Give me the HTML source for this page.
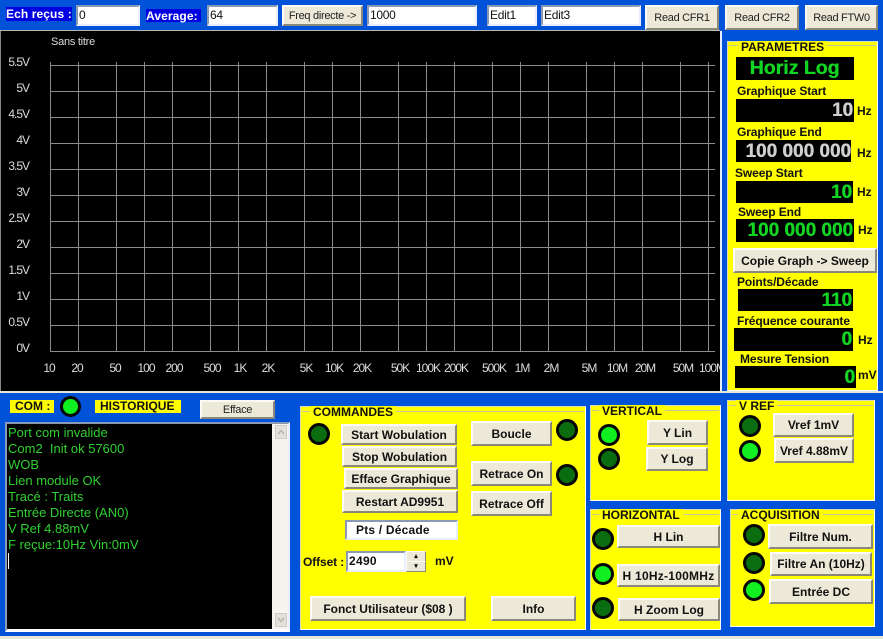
<!DOCTYPE html>
<html><head><meta charset="utf-8">
<style>
html,body{margin:0;padding:0;width:883px;height:639px;overflow:hidden;background:#0052d8}
body{position:relative;font-family:"Liberation Sans",sans-serif;font-size:12px;color:#000}
div{position:absolute;box-sizing:border-box;white-space:nowrap}
.btn{background:#ece9d8;border:2px solid;border-color:#fbfaf4 #8a8878 #8a8878 #fbfaf4;text-align:center;font-weight:bold;font-size:12px;letter-spacing:0;color:#111;display:flex;align-items:center;justify-content:center}
.thin{font-weight:normal;font-size:11px;letter-spacing:-.3px;color:#222}
.in{background:#fff;border:2px solid;border-color:#8b99b5 #e8eefc #e8eefc #8b99b5;padding-left:1px;font-size:12px;line-height:17px;letter-spacing:-.3px;color:#111}
.gb{background:#ffff00;border:1px solid #d8d8c0;border-right-color:#fff;border-bottom-color:#fff}
.gl{height:1px;background:#c8c8a0}
.t{font-weight:bold;font-size:12px;letter-spacing:0;line-height:13px;background:#ffff00;padding:0 3px;color:#111}
.l{font-weight:bold;font-size:12px;letter-spacing:-.1px;line-height:14px;color:#111}
.led{width:22px;height:22px;border-radius:50%;border:3px solid #050505;background:#0a6e10}
.on{background:#10f020}
.v{background:#000;font-weight:bold;font-size:19px;text-align:right;color:#12d422;line-height:24px;padding-right:1px;text-shadow:.4px 0 0 currentColor}
.w{color:#cfcfcf}
.m{left:8px;color:#30d030;font-size:13px;line-height:16px;height:16px}
.top{font-weight:bold;color:#fff;background:#0000e0;font-size:12px;letter-spacing:.1px;line-height:14px}
svg text{letter-spacing:-1px}
</style></head><body>

<!-- top bar -->
<div class="top" style="left:6px;top:7px;width:66px;height:14px">Ech reçus :</div>
<div class="in" style="left:76px;top:5px;width:64px;height:21px">0</div>
<div class="top" style="left:146px;top:9px;width:55px;height:13px">Average:</div>
<div class="in" style="left:207px;top:5px;width:71px;height:21px">64</div>
<div class="btn thin" style="left:282px;top:5px;width:81px;height:21px">Freq directe -&gt;</div>
<div class="in" style="left:367px;top:5px;width:110px;height:21px">1000</div>
<div class="in" style="left:487px;top:5px;width:50px;height:21px">Edit1</div>
<div class="in" style="left:541px;top:5px;width:100px;height:21px">Edit3</div>
<div class="btn thin" style="left:645px;top:5px;width:74px;height:25px">Read CFR1</div>
<div class="btn thin" style="left:725px;top:5px;width:74px;height:25px">Read CFR2</div>
<div class="btn thin" style="left:805px;top:5px;width:73px;height:25px">Read FTW0</div>

<!-- graph -->
<div style="left:0;top:30px;width:720px;height:1px;background:#b8b8b0"></div>
<div style="left:0;top:31px;width:720px;height:360px;background:#000;border-left:1px solid #888"></div>
<svg style="position:absolute;left:0;top:31px" width="720" height="360" viewBox="0 31 720 360" font-family="'Liberation Sans',sans-serif" font-size="12" fill="#dcdcdc">
<g stroke="#8c8c8c" stroke-width="1" shape-rendering="crispEdges">
<path d="M50.5 62V351M78.5 62V351M116.5 62V351M144.5 62V351M172.5 62V351M210.5 62V351M238.5 62V351M266.5 62V351M304.5 62V351M332.5 62V351M360.500 62V351M398.5 62V351M426.5 62V351M454.5 62V351M492.5 62V351M520.5 62V351M548.5 62V351M586.5 62V351M614.5 62V351M642.5 62V351M680.5 62V351M708.5 62V351"/>
<path d="M50 65.5H715M50 91.5H715M50 117.5H715M50 143.5H715M50 169.5H715M50 195.5H715M50 221.5H715M50 247.5H715M50 273.5H715M50 299.5H715M50 325.5H715M50 351.5H715"/>
</g>
<text x="51" y="45" font-size="11" style="letter-spacing:-.25px">Sans titre</text>
<g text-anchor="end">
<text x="29" y="66">5.5V</text><text x="29" y="92">5V</text><text x="29" y="118">4.5V</text><text x="29" y="144">4V</text><text x="29" y="170">3.5V</text><text x="29" y="196">3V</text><text x="29" y="222">2.5V</text><text x="29" y="248">2V</text><text x="29" y="274">1.5V</text><text x="29" y="300">1V</text><text x="29" y="326">0.5V</text><text x="29" y="352">0V</text>
</g>
<g text-anchor="middle">
<text x="49" y="372">10</text><text x="77" y="372">20</text><text x="115" y="372">50</text><text x="146" y="372">100</text><text x="174" y="372">200</text><text x="212" y="372">500</text><text x="240" y="372">1K</text><text x="268" y="372">2K</text><text x="306" y="372">5K</text><text x="334" y="372">10K</text><text x="362" y="372">20K</text><text x="400" y="372">50K</text><text x="428" y="372">100K</text><text x="456" y="372">200K</text><text x="494" y="372">500K</text><text x="522" y="372">1M</text><text x="551" y="372">2M</text><text x="589" y="372">5M</text><text x="617" y="372">10M</text><text x="645" y="372">20M</text><text x="683" y="372">50M</text><text x="712" y="372">100M</text>
</g>
</svg>

<!-- right panel -->
<div style="left:720px;top:31px;width:2px;height:360px;background:#e8eefc"></div>
<div class="gb" style="left:727px;top:41px;width:151px;height:350px"></div>
<div class="gl" style="left:729px;top:45px;width:147px"></div>
<div class="t" style="left:738px;top:41px">PARAMETRES</div>
<div class="v" style="left:736px;top:57px;width:118px;height:23px;text-align:center;font-size:19.5px;line-height:23px">Horiz Log</div>
<div class="l" style="left:737px;top:84px">Graphique Start</div>
<div class="v w" style="left:736px;top:99px;width:118px;height:23px">10</div>
<div class="l" style="left:857px;top:104px">Hz</div>
<div class="l" style="left:737px;top:125px">Graphique End</div>
<div class="v w" style="left:736px;top:140px;width:115px;height:22px;line-height:23px;padding-right:0">100 000 000</div>
<div class="l" style="left:857px;top:146px">Hz</div>
<div class="l" style="left:735px;top:166px">Sweep Start</div>
<div class="v" style="left:736px;top:181px;width:117px;height:22px;line-height:23px">10</div>
<div class="l" style="left:857px;top:185px">Hz</div>
<div class="l" style="left:738px;top:205px">Sweep End</div>
<div class="v" style="left:736px;top:219px;width:118px;height:23px">100 000 000</div>
<div class="l" style="left:858px;top:223px">Hz</div>
<div class="btn" style="left:733px;top:248px;width:144px;height:25px">Copie Graph -&gt; Sweep</div>
<div class="l" style="left:737px;top:275px">Points/Décade</div>
<div class="v" style="left:738px;top:289px;width:115px;height:22px;line-height:23px">110</div>
<div class="l" style="left:737px;top:314px">Fréquence courante</div>
<div class="v" style="left:734px;top:328px;width:119px;height:23px">0</div>
<div class="l" style="left:858px;top:333px">Hz</div>
<div class="l" style="left:740px;top:352px">Mesure Tension</div>
<div class="v" style="left:735px;top:366px;width:121px;height:22px;line-height:23px">0</div>
<div class="l" style="left:858px;top:368px">mV</div>

<!-- separators -->
<div style="left:0;top:391px;width:883px;height:2px;background:#e8e6d8"></div>
<div style="left:0;top:636px;width:883px;height:3px;background:#e8e6d8"></div>

<!-- COM / historique -->
<div class="t" style="left:10px;top:400px;width:44px;height:13px;padding:0 0 0 5px">COM :</div>
<div class="led on" style="left:60px;top:396px;width:21px;height:21px"></div>
<div class="t" style="left:95px;top:400px;width:86px;height:13px;padding:0 0 0 5px">HISTORIQUE</div>
<div class="btn thin" style="left:200px;top:400px;width:75px;height:19px">Efface</div>
<div style="left:5px;top:422px;width:285px;height:210px;background:#fff;border:2px solid;border-color:#8b99b5 #e8eefc #fff #8b99b5"></div>
<div style="left:7px;top:424px;width:265px;height:205px;background:#000"></div>
<div style="left:272px;top:424px;width:16px;height:205px;background:#f6f4ec"></div>
<div style="left:275px;top:425px;width:12px;height:14px;background:#e4e2d8;border:1px solid #ccc"></div>
<div style="left:275px;top:613px;width:12px;height:14px;background:#e4e2d8;border:1px solid #ccc"></div>
<svg style="position:absolute;left:275px;top:425px" width="12" height="202" fill="none" stroke="#b4b4aa" stroke-width="1.5"><path d="M3 9L6 5.500L9 9"/><path d="M3 193L6 196.500L9 193"/></svg>
<div class="m" style="top:425px">Port com invalide</div>
<div class="m" style="top:441px">Com2&nbsp; Init ok 57600</div>
<div class="m" style="top:457px">WOB</div>
<div class="m" style="top:473px">Lien module OK</div>
<div class="m" style="top:489px">Tracé : Traits</div>
<div class="m" style="top:505px">Entrée Directe (AN0)</div>
<div class="m" style="top:521px">V Ref 4.88mV</div>
<div class="m" style="top:537px">F reçue:10Hz Vin:0mV</div>
<div style="left:8px;top:553px;width:1px;height:16px;background:#fff"></div>

<!-- commandes -->
<div class="gb" style="left:300px;top:406px;width:286px;height:224px"></div>
<div class="gl" style="left:302px;top:411px;width:282px"></div>
<div class="t" style="left:310px;top:406px">COMMANDES</div>
<div class="led" style="left:308px;top:423px"></div>
<div class="led" style="left:556px;top:419px"></div>
<div class="led" style="left:556px;top:464px"></div>
<div class="btn" style="left:341px;top:424px;width:116px;height:21px">Start Wobulation</div>
<div class="btn" style="left:342px;top:446px;width:115px;height:21px">Stop Wobulation</div>
<div class="btn" style="left:344px;top:468px;width:114px;height:21px">Efface Graphique</div>
<div class="btn" style="left:342px;top:490px;width:116px;height:23px">Restart AD9951</div>
<div class="btn" style="left:471px;top:421px;width:81px;height:25px">Boucle</div>
<div class="btn" style="left:471px;top:461px;width:81px;height:25px">Retrace On</div>
<div class="btn" style="left:471px;top:491px;width:81px;height:25px">Retrace Off</div>
<div class="in" style="left:345px;top:520px;width:113px;height:20px;font-weight:bold;padding-left:9px;letter-spacing:.2px">Pts / Décade</div>
<div class="l" style="left:303px;top:555px">Offset :</div>
<div class="in" style="left:346px;top:551px;width:60px;height:21px;font-weight:bold;letter-spacing:.3px">2490</div>
<div class="btn" style="left:406px;top:551px;width:20px;height:11px;font-size:7px;border-width:1px;line-height:9px">▴</div>
<div class="btn" style="left:406px;top:561px;width:20px;height:11px;font-size:7px;border-width:1px;line-height:9px">▾</div>
<div class="l" style="left:435px;top:554px">mV</div>
<div class="btn" style="left:310px;top:596px;width:156px;height:25px">Fonct Utilisateur ($08 )</div>
<div class="btn" style="left:491px;top:596px;width:85px;height:25px">Info</div>

<!-- vertical -->
<div class="gb" style="left:590px;top:405px;width:131px;height:96px"></div>
<div class="gl" style="left:592px;top:410px;width:127px"></div>
<div class="t" style="left:599px;top:405px">VERTICAL</div>
<div class="led on" style="left:598px;top:424px"></div>
<div class="led" style="left:598px;top:448px"></div>
<div class="btn" style="left:647px;top:420px;width:61px;height:25px">Y Lin</div>
<div class="btn" style="left:646px;top:447px;width:62px;height:24px">Y Log</div>

<!-- v ref -->
<div class="gb" style="left:727px;top:400px;width:148px;height:101px"></div>
<div class="gl" style="left:729px;top:405px;width:144px"></div>
<div class="t" style="left:736px;top:400px">V REF</div>
<div class="led" style="left:739px;top:415px"></div>
<div class="led on" style="left:739px;top:440px"></div>
<div class="btn" style="left:773px;top:413px;width:81px;height:24px">Vref 1mV</div>
<div class="btn" style="left:774px;top:438px;width:80px;height:25px">Vref 4.88mV</div>

<!-- horizontal -->
<div class="gb" style="left:590px;top:509px;width:131px;height:121px"></div>
<div class="gl" style="left:592px;top:514px;width:127px"></div>
<div class="t" style="left:599px;top:509px">HORIZONTAL</div>
<div class="led" style="left:592px;top:528px"></div>
<div class="led on" style="left:592px;top:563px"></div>
<div class="led" style="left:592px;top:597px"></div>
<div class="btn" style="left:617px;top:525px;width:103px;height:23px">H Lin</div>
<div class="btn" style="left:617px;top:564px;width:103px;height:23px;letter-spacing:.25px">H 10Hz-100MHz</div>
<div class="btn" style="left:618px;top:598px;width:102px;height:23px">H Zoom Log</div>

<!-- acquisition -->
<div class="gb" style="left:730px;top:509px;width:145px;height:118px"></div>
<div class="gl" style="left:732px;top:514px;width:141px"></div>
<div class="t" style="left:738px;top:509px">ACQUISITION</div>
<div class="led" style="left:743px;top:524px"></div>
<div class="led" style="left:743px;top:552px"></div>
<div class="led on" style="left:743px;top:579px"></div>
<div class="btn" style="left:768px;top:524px;width:105px;height:25px">Filtre Num.</div>
<div class="btn" style="left:770px;top:552px;width:102px;height:24px">Filtre An (10Hz)</div>
<div class="btn" style="left:769px;top:579px;width:104px;height:25px">Entrée DC</div>
</body></html>
